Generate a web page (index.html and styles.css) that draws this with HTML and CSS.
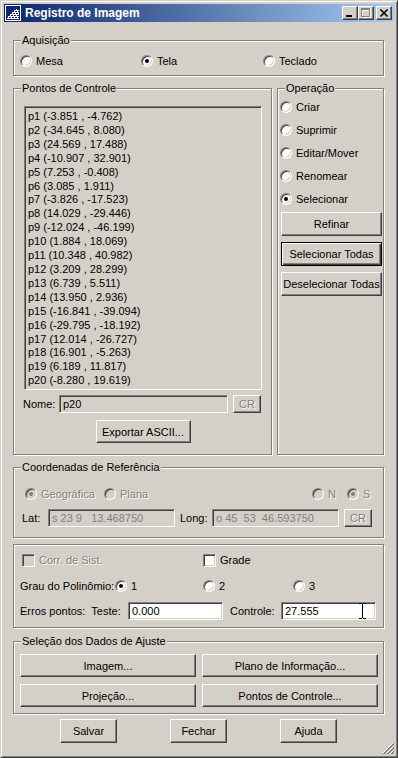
FILE: index.html
```html
<!DOCTYPE html>
<html lang="pt">
<head>
  <meta charset="UTF-8">
  <meta name="viewport" content="width=device-width, initial-scale=1.0">
  <title>Registro de Imagem</title>
  <link rel="stylesheet" href="styles.css">
</head>
<body>
  <div class="window">
    <div class="titlebar">
      <svg class="app-icon" width="16" height="16" viewBox="0 0 16 16">
        <rect x="0.5" y="0.5" width="15" height="15" fill="#102778" stroke="#fff"/>
        <path d="M9 5.5h5M7 7.5h7M5 9.5h9M3 11.5h11M2 13.5h12M11.5 4v2M9.5 6v2M12.5 6v2M7.5 8v2M10.5 8v2M13.5 8v2M5.5 10v2M8.5 10v2M11.5 10v2M3.5 12v2M6.5 12v2M9.5 12v2M12.5 12v2" stroke="#fff" stroke-width="1"/>
      </svg>
      <span class="title">Registro de Imagem</span>
      <span class="cap-btn">
        <svg width="14" height="12"><rect x="3" y="8" width="6" height="2" fill="#000"/></svg>
      </span>
      <span class="cap-btn">
        <svg width="14" height="12">
          <path d="M3.5 2.5h8v8h-8zM3 3.5h9" fill="none" stroke="#fff"/>
          <path d="M2.5 1.5h8v8h-8zM2 2.5h9" fill="none" stroke="#808080"/>
        </svg>
      </span>
      <span class="cap-btn close">
        <svg width="14" height="12"><path d="M3.5 2.5L10.5 9.5M10.5 2.5L3.5 9.5" stroke="#000" stroke-width="1.7"/></svg>
      </span>
    </div>

    <fieldset class="group aquisicao">
      <legend>Aquisição</legend>
      <div class="acq-row">
        <div class="opt"><span class="radio"></span>Mesa</div>
        <div class="opt"><span class="radio on"></span>Tela</div>
        <div class="opt"><span class="radio"></span>Teclado</div>
      </div>
    </fieldset>

    <div class="split">
      <fieldset class="group pontos">
        <legend>Pontos de Controle</legend>
        <div class="pontos-body">
          <div class="listbox sunken">
            <div>p1 (-3.851 , -4.762)</div>
            <div>p2 (-34.645 , 8.080)</div>
            <div>p3 (24.569 , 17.488)</div>
            <div>p4 (-10.907 , 32.901)</div>
            <div>p5 (7.253 , -0.408)</div>
            <div>p6 (3.085 , 1.911)</div>
            <div>p7 (-3.826 , -17.523)</div>
            <div>p8 (14.029 , -29.446)</div>
            <div>p9 (-12.024 , -46.199)</div>
            <div>p10 (1.884 , 18.069)</div>
            <div>p11 (10.348 , 40.982)</div>
            <div>p12 (3.209 , 28.299)</div>
            <div>p13 (6.739 , 5.511)</div>
            <div>p14 (13.950 , 2.936)</div>
            <div>p15 (-16.841 , -39.094)</div>
            <div>p16 (-29.795 , -18.192)</div>
            <div>p17 (12.014 , -26.727)</div>
            <div>p18 (16.901 , -5.263)</div>
            <div>p19 (6.189 , 11.817)</div>
            <div>p20 (-8.280 , 19.619)</div>
          </div>
          <div class="nome-row">
            <span class="lbl nome-lbl">Nome:</span>
            <div class="field sunken nome-field">p20</div>
            <div class="btn disabled cr">CR</div>
          </div>
          <div class="export-row">
            <div class="btn export">Exportar ASCII...</div>
          </div>
        </div>
      </fieldset>

      <fieldset class="group operacao">
        <legend>Operação</legend>
        <div class="ops">
          <div class="opt"><span class="radio"></span>Criar</div>
          <div class="opt"><span class="radio"></span>Suprimir</div>
          <div class="opt"><span class="radio"></span>Editar/Mover</div>
          <div class="opt"><span class="radio"></span>Renomear</div>
          <div class="opt"><span class="radio on"></span>Selecionar</div>
          <div class="btn refinar">Refinar</div>
          <div class="btn default">Selecionar Todas</div>
          <div class="btn">Deselecionar Todas</div>
        </div>
      </fieldset>
    </div>

    <fieldset class="group coord">
      <legend>Coordenadas de Referência</legend>
      <div class="coord-opts">
        <div class="opt disabled"><span class="radio on"></span>Geográfica</div>
        <div class="opt disabled"><span class="radio"></span>Plana</div>
        <div class="opt disabled"><span class="radio"></span>N</div>
        <div class="opt disabled"><span class="radio on"></span>S</div>
      </div>
      <div class="coord-fields">
        <span class="lbl lat-lbl">Lat:</span>
        <div class="field sunken grey-text coord-field">s 23 9   13.468750</div>
        <span class="lbl long-lbl">Long:</span>
        <div class="field sunken grey-text coord-field">o 45  53  46.593750</div>
        <div class="btn disabled cr coord-cr">CR</div>
      </div>
    </fieldset>

    <fieldset class="group params">
      <div class="chk-row">
        <div class="opt disabled corr"><span class="check"></span>Corr. de Sist.</div>
        <div class="opt"><span class="check"></span>Grade</div>
      </div>
      <div class="grau-row">
        <span class="lbl grau-lbl">Grau do Polinômio:</span>
        <div class="opt grau1"><span class="radio on"></span>1</div>
        <div class="opt grau2"><span class="radio"></span>2</div>
        <div class="opt"><span class="radio"></span>3</div>
      </div>
      <div class="erros-row">
        <span class="lbl erros-lbl">Erros pontos:  Teste:</span>
        <div class="field sunken white erro-field">0.000</div>
        <span class="lbl controle-lbl">Controle:</span>
        <div class="field sunken white erro-field">27.555<svg class="ibeam" width="7" height="16" viewBox="0 0 7 16"><path d="M0 0.5h3M4 0.5h3M3.5 1v14M0 15.5h3M4 15.5h3" stroke="#000" fill="none"/></svg></div>
      </div>
    </fieldset>

    <fieldset class="group selecao">
      <legend>Seleção dos Dados de Ajuste</legend>
      <div class="sel-grid">
        <div class="btn">Imagem...</div>
        <div class="btn">Plano de Informação...</div>
        <div class="btn">Projeção...</div>
        <div class="btn">Pontos de Controle...</div>
      </div>
    </fieldset>

    <div class="footer-btns">
      <div class="btn">Salvar</div>
      <div class="btn">Fechar</div>
      <div class="btn">Ajuda</div>
    </div>

    <svg class="grip" width="12" height="12" viewBox="0 0 12 12">
      <path d="M11 1L1 11M11 5L5 11M11 9L9 11" stroke="#fff" fill="none"/>
      <path d="M12 1L1 12M12 2L2 12M12 5L5 12M12 6L6 12M12 9L9 12M12 10L10 12" stroke="#808080" fill="none"/>
    </svg>
  </div>
</body>
</html>
```

FILE: styles.css
```css
* {
  box-sizing: border-box;
}

body {
  margin: 0;
  background-color: #d4d0c8;
  font-family: "Liberation Sans", Arial, sans-serif;
  font-size: 11px;
  color: #000;
}

.window {
  position: relative;
  width: 398px;
  height: 758px;
  overflow: hidden;
  padding: 3px;
  background-color: #d4d0c8;
  border: 1px solid;
  border-color: #d4d0c8 #404040 #404040 #d4d0c8;
  box-shadow: inset 1px 1px #fff, inset -1px -1px #808080;
}

/* title bar */
.titlebar {
  display: flex;
  align-items: center;
  height: 18px;
  padding: 0 2px 0 1px;
  background: linear-gradient(to right, #0a246a, #a6caf0);
}

.app-icon {
  flex: none;
  display: block;
}

.title {
  flex: 1;
  margin-left: 4px;
  color: #fff;
  font-weight: bold;
  font-size: 12px;
  white-space: nowrap;
}

.cap-btn {
  display: block;
  width: 16px;
  height: 14px;
  background-color: #d4d0c8;
  border: 1px solid;
  border-color: #fff #404040 #404040 #fff;
  box-shadow: inset -1px -1px #808080;
}

.cap-btn svg {
  display: block;
}

.cap-btn.close {
  margin-left: 2px;
}

/* group boxes */
.group {
  margin: 0 10px 0 9px;
  padding: 0;
  min-width: 0;
  border: 1px solid #808080;
  box-shadow: inset 1px 1px #fff, 1px 1px #fff;
}

.group legend {
  margin-left: 7px;
  padding: 0 1px;
  line-height: 14px;
  background-color: #d4d0c8;
}

.aquisicao {
  margin-top: 11px;
}

.acq-row {
  display: grid;
  grid-template-columns: 121px 122px 1fr;
  padding: 7px 0 7px 6px;
}

/* radios, checks */
.opt {
  display: flex;
  align-items: center;
  height: 14px;
  white-space: nowrap;
}

.opt.disabled {
  color: #808080;
  text-shadow: 1px 1px 0 #fff;
}

.radio {
  position: relative;
  flex: none;
  width: 12px;
  height: 12px;
  margin-right: 4px;
  border-radius: 50%;
  background-color: #fff;
  border: 1px solid;
  border-color: #808080 #fff #fff #808080;
  box-shadow: inset 1px 1px #404040, inset -1px -1px #d4d0c8;
}

.radio.on::after {
  content: "";
  position: absolute;
  left: 3px;
  top: 3px;
  width: 4px;
  height: 4px;
  border-radius: 50%;
  background-color: #000;
}

.disabled .radio {
  background-color: #d4d0c8;
}

.disabled .radio.on::after {
  background-color: #808080;
}

.check {
  flex: none;
  width: 13px;
  height: 13px;
  margin-right: 4px;
  background-color: #fff;
  border: 1px solid;
  border-color: #808080 #fff #fff #808080;
  box-shadow: inset 1px 1px #404040, inset -1px -1px #d4d0c8;
}

.disabled .check {
  background-color: #d4d0c8;
}

/* fields and buttons */
.sunken {
  background-color: #d4d0c8;
  border: 1px solid;
  border-color: #808080 #fff #fff #808080;
  box-shadow: inset 1px 1px #404040, inset -1px -1px #d4d0c8;
}

.field {
  position: relative;
  display: flex;
  align-items: center;
  height: 18px;
  padding: 0 3px;
  white-space: pre;
  flex: none;
}

.field.white {
  background-color: #fff;
}

.grey-text {
  color: #808080;
}

.lbl {
  flex: none;
  white-space: pre;
}

.btn {
  display: flex;
  align-items: center;
  justify-content: center;
  flex: none;
  background-color: #d4d0c8;
  border: 1px solid;
  border-color: #fff #404040 #404040 #fff;
  box-shadow: inset -1px -1px #808080;
  white-space: nowrap;
}

.btn.default {
  border-color: #000;
  box-shadow: inset 1px 1px #fff, inset -1px -1px #404040, inset -2px -2px #808080;
}

.btn.disabled {
  color: #808080;
  text-shadow: 1px 1px 0 #fff;
}

/* pontos / operacao */
.split {
  display: flex;
  gap: 5px;
  margin: 5px 10px 0 9px;
}

.split .group {
  margin: 0;
}

.pontos {
  flex: none;
  width: 259px;
}

.operacao {
  flex: 1;
}

.pontos-body {
  padding: 11px 9px 11px 10px;
}

.listbox {
  height: 284px;
  padding: 3px 0 0 3px;
  line-height: 13.9px;
  white-space: nowrap;
  overflow: hidden;
}

.nome-row {
  display: flex;
  align-items: center;
  margin-top: 5px;
}

.nome-lbl {
  width: 36px;
  margin-left: -1px;
}

.nome-field {
  width: 169px;
}

.cr {
  width: 28px;
  height: 18px;
  margin-left: 5px;
}

.export-row {
  display: flex;
  justify-content: center;
  margin-top: 7px;
}

.export {
  width: 95px;
  height: 23px;
}

.ops {
  padding-left: 2px;
}

.ops .opt {
  height: 23px;
}

.ops .btn {
  width: 101px;
  height: 24px;
  margin: 6px 0 0 1px;
}

.ops .btn.refinar {
  margin-top: 2px;
}

/* coordenadas */
.coord {
  margin-top: 5px;
}

.coord-opts {
  display: grid;
  grid-template-columns: 79px 208px 35px 1fr;
  padding: 13px 0 0 11px;
}

.coord-fields {
  display: flex;
  align-items: center;
  margin-top: 8px;
  padding: 0 0 10px 8px;
}

.lat-lbl {
  width: 26px;
}

.coord-field {
  width: 127px;
}

.long-lbl {
  width: 32px;
  margin-left: 5px;
}

/* parametros */
.params {
  margin-top: 6px;
}

.chk-row {
  display: flex;
  padding: 8px 0 0 8px;
}

.corr {
  width: 181px;
}

.grau-row {
  display: flex;
  align-items: center;
  height: 14px;
  margin-top: 12px;
  padding-left: 6px;
}

.grau-lbl {
  width: 95px;
}

.grau1 {
  width: 88px;
}

.grau2 {
  width: 90px;
}

.erros-row {
  display: flex;
  align-items: center;
  margin-top: 9px;
  padding: 0 0 7px 6px;
}

.erros-lbl {
  width: 108px;
}

.erro-field {
  width: 95px;
}

.controle-lbl {
  width: 51px;
  margin-left: 7px;
}

.ibeam {
  position: absolute;
  left: 77px;
  top: 0;
}

/* selecao */
.selecao {
  margin-top: 6px;
}

.sel-grid {
  display: grid;
  grid-template-columns: 176px 176px;
  grid-auto-rows: 23px;
  gap: 7px 6px;
  padding: 6px 0 6px 6px;
}

.footer-btns {
  display: flex;
  gap: 53px;
  margin-top: 5px;
  padding-left: 56px;
}

.footer-btns .btn {
  width: 57px;
  height: 24px;
}

.grip {
  position: absolute;
  right: 3px;
  bottom: 3px;
}
```
